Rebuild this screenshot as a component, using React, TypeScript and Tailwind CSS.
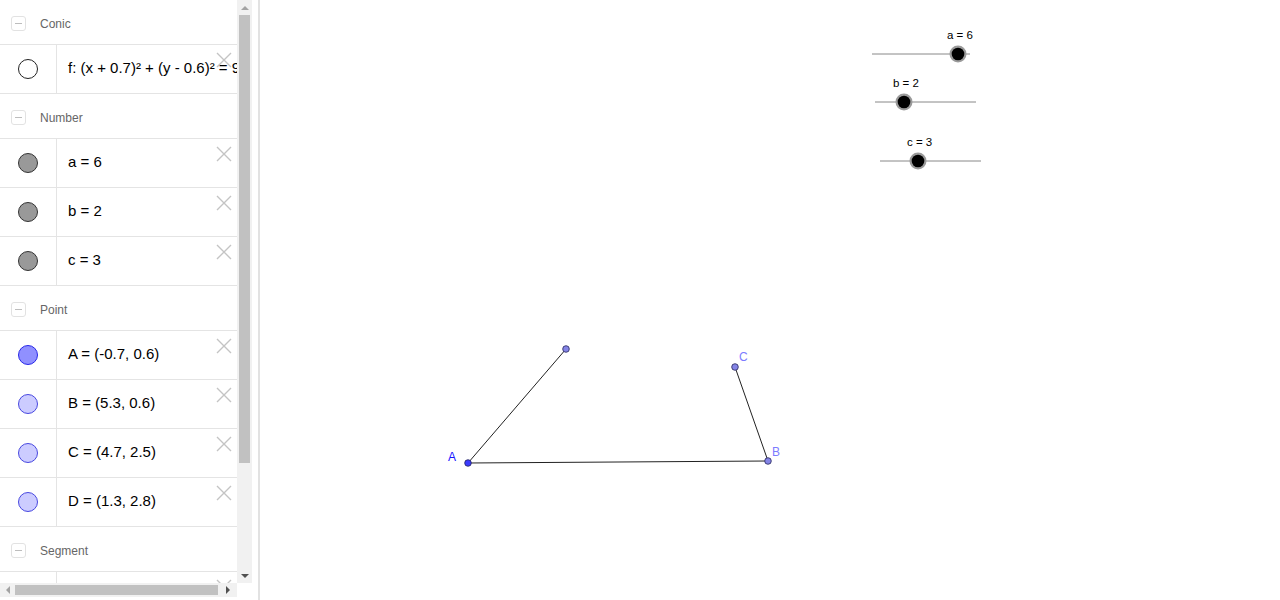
import type { ReactNode } from 'react'

type Marble = 'conic' | 'number' | 'pointA' | 'point'

const marbleClass: Record<Marble, string> = {
  conic: 'bg-white border-[1.5px] border-[#222]',
  number: 'bg-[#999999] border border-[#333]',
  pointA: 'bg-[#9090ff] border border-[#2828e8]',
  point: 'bg-[#ccccff] border border-[#4848e0]',
}

function DeleteIcon() {
  return (
    <svg className="absolute right-[5px] top-[7px]" width="16" height="16" viewBox="0 0 16 16">
      <path d="M1 1 L15 15 M15 1 L1 15" stroke="#c4c4c4" strokeWidth="1.4" fill="none" />
    </svg>
  )
}

function Header({ label }: { label: string }) {
  return (
    <div className="flex h-[45px] items-center gap-[14px] border-b border-[#e4e4e4] pl-[11px] pt-[3px]">
      <div className="flex size-[15px] items-center justify-center rounded-[3px] border border-[#e2e2e2]">
        <div className="h-px w-[7px] bg-[#bdbdbd]" />
      </div>
      <span className="text-[12px] text-[#666]">{label}</span>
    </div>
  )
}

function Row({ marble, children }: { marble: Marble; children?: ReactNode }) {
  return (
    <div className="relative flex h-[49px] border-b border-[#e4e4e4]">
      <div className="flex w-[57px] shrink-0 items-center justify-center border-r border-[#e4e4e4]">
        <div className={`size-[20px] rounded-full ${marbleClass[marble]}`} />
      </div>
      <div className="flex min-w-0 flex-1 items-center overflow-hidden whitespace-nowrap pb-[2px] pl-[11px] text-[15px] text-black">
        {children}
      </div>
      <DeleteIcon />
    </div>
  )
}

function Slider({ x1, x2, y, t, label, lx }: { x1: number; x2: number; y: number; t: number; label: string; lx: number }) {
  return (
    <g>
      <line x1={x1} y1={y} x2={x2} y2={y} stroke="#888" strokeWidth="1" />
      <text x={lx} y={y - 15} fontSize="11.5" fill="#000" fontFamily="Liberation Sans, sans-serif">
        {label}
      </text>
      <circle cx={t} cy={y} r="8.5" fill="#9a9a9a" />
      <circle cx={t} cy={y} r="6.3" fill="#000" />
    </g>
  )
}

function Pt({ x, y, dark }: { x: number; y: number; dark?: boolean }) {
  return <circle cx={x} cy={y} r="3.3" fill={dark ? '#3a3aff' : '#8484e6'} stroke="#26265a" strokeWidth="0.8" />
}

export default function App() {
  return (
    <div className="flex h-[600px] w-[1280px] overflow-hidden bg-white" style={{ fontFamily: '"Liberation Sans", Arial, sans-serif' }}>
      {/* algebra view */}
      <div className="flex w-[260px] shrink-0 flex-col border-r-2 border-[#e2e2e2]">
        <div className="flex h-[583px]">
          <div className="w-[237px] overflow-hidden">
            <Header label="Conic" />
            <Row marble="conic">f: (x + 0.7)² + (y - 0.6)² = 9</Row>
            <Header label="Number" />
            <Row marble="number">a = 6</Row>
            <Row marble="number">b = 2</Row>
            <Row marble="number">c = 3</Row>
            <Header label="Point" />
            <Row marble="pointA">A = (-0.7, 0.6)</Row>
            <Row marble="point">B = (5.3, 0.6)</Row>
            <Row marble="point">C = (4.7, 2.5)</Row>
            <Row marble="point">D = (1.3, 2.8)</Row>
            <Header label="Segment" />
            <Row marble="point" />
          </div>
          {/* vertical scrollbar */}
          <div className="flex w-[15px] flex-col items-center bg-[#f1f1f1]">
            <div className="flex h-[15px] items-center justify-center">
              <div className="h-0 w-0 border-x-[4px] border-b-[4px] border-x-transparent border-b-[#a3a3a3]" />
            </div>
            <div className="h-[448px] w-[11px] bg-[#c1c1c1]" />
            <div className="flex-1" />
            <div className="flex h-[15px] items-center justify-center">
              <div className="h-0 w-0 border-x-[4px] border-t-[4px] border-x-transparent border-t-[#505050]" />
            </div>
          </div>
        </div>
        {/* horizontal scrollbar */}
        <div className="flex h-[14px] w-[237px] items-center bg-[#f1f1f1]">
          <div className="flex w-[15px] justify-center">
            <div className="h-0 w-0 border-y-[4px] border-r-[4px] border-y-transparent border-r-[#a3a3a3]" />
          </div>
          <div className="h-[10px] w-[203px] bg-[#c1c1c1]" />
          <div className="flex flex-1 justify-center">
            <div className="h-0 w-0 border-y-[4px] border-l-[4px] border-y-transparent border-l-[#505050]" />
          </div>
        </div>
      </div>

      {/* graphics view */}
      <div className="flex-1">
        <svg className="block h-[600px] w-full" viewBox="260 0 1020 600">
          <Slider x1={872} x2={970} y={54} t={958} label="a = 6" lx={947} />
          <Slider x1={875} x2={976} y={102} t={904} label="b = 2" lx={893} />
          <Slider x1={880} x2={981} y={161} t={918} label="c = 3" lx={907} />

          <line x1={468} y1={463} x2={566} y2={349} stroke="#222" strokeWidth="1" />
          <line x1={468} y1={463} x2={768} y2={461} stroke="#222" strokeWidth="1" />
          <line x1={768} y1={461} x2={735} y2={367} stroke="#222" strokeWidth="1" />

          <Pt x={566} y={349} />
          <Pt x={735} y={367} />
          <Pt x={768} y={461} />
          <Pt x={468} y={463} dark />

          <text x={448} y={461} fontSize="12" fill="#1414ff" fontFamily="Liberation Sans, sans-serif">A</text>
          <text x={772} y={456} fontSize="12" fill="#7c7cff" fontFamily="Liberation Sans, sans-serif">B</text>
          <text x={739} y={361} fontSize="12" fill="#7c7cff" fontFamily="Liberation Sans, sans-serif">C</text>
        </svg>
      </div>
    </div>
  )
}
